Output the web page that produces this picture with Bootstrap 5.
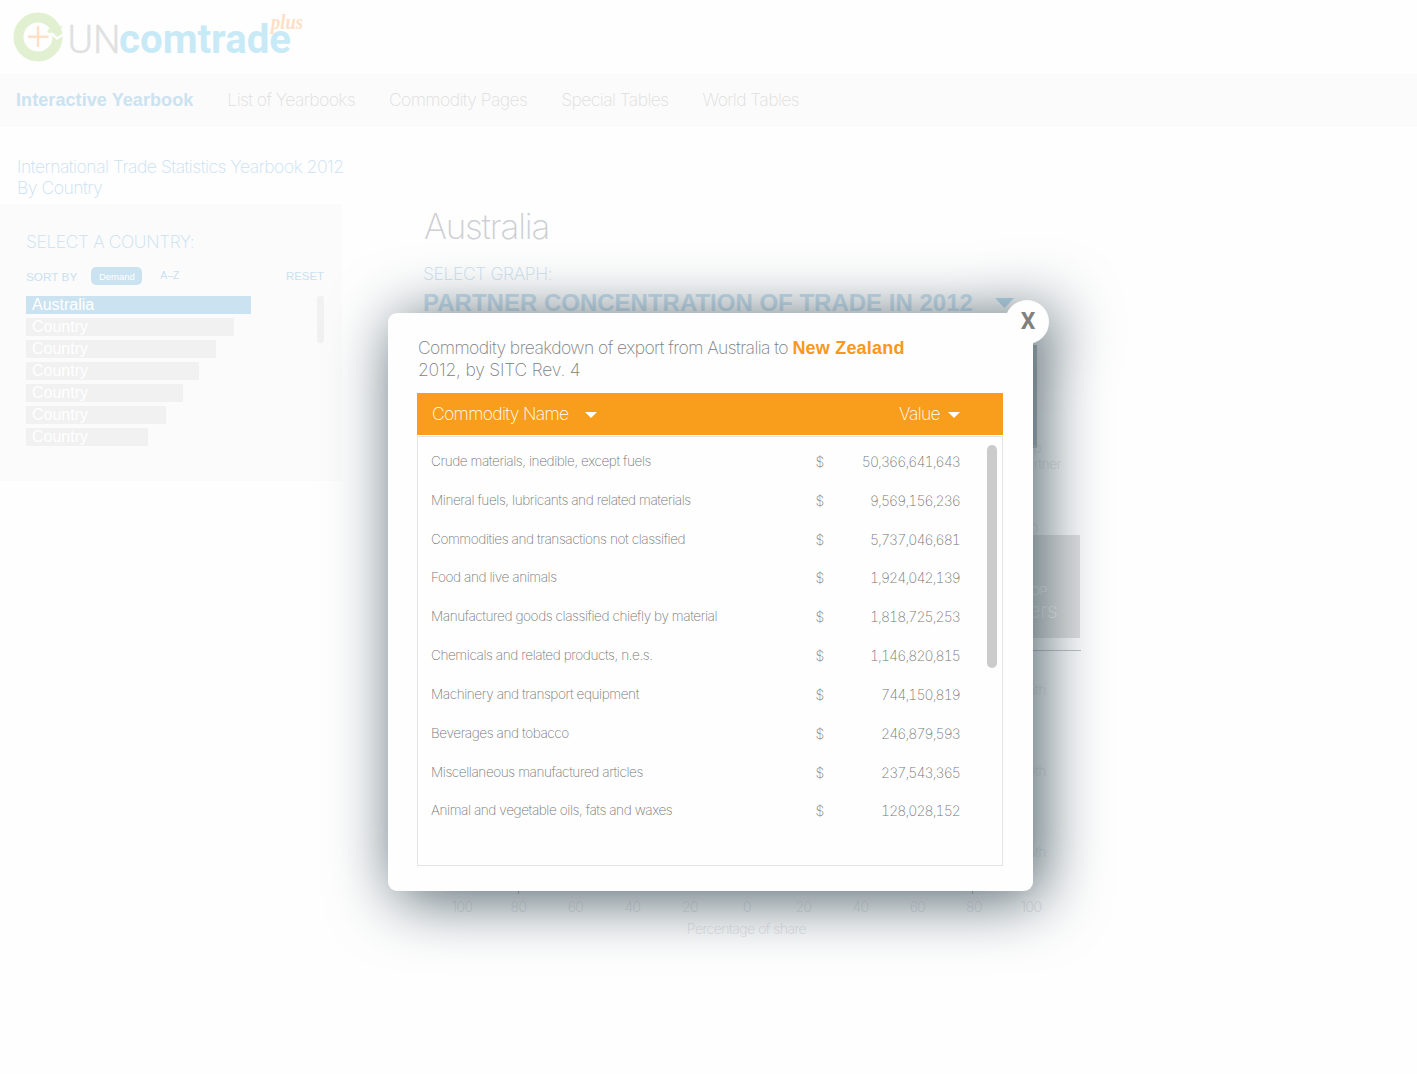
<!DOCTYPE html>
<html lang="en">
<head>
<meta charset="utf-8">
<meta name="viewport" content="width=device-width, initial-scale=1">
<title>UN Comtrade Plus - Interactive Yearbook</title>
<link href="https://cdn.jsdelivr.net/npm/bootstrap@5.3.0/dist/css/bootstrap.min.css" rel="stylesheet">
<style>
  body { font-family: Inter, "Liberation Sans", sans-serif; font-weight: 200; font-size: 17.5px; line-height: 21px; letter-spacing: -.03em; color: #e2e2e2; background: #fefefe; height: 1074px; overflow: hidden; }
  .bold-sans { font-family: "Liberation Sans", Arial, sans-serif; font-weight: 700; letter-spacing: 0; }
  .plain-sans { font-family: "Liberation Sans", Arial, sans-serif; font-weight: 400; letter-spacing: 0; }
  .pale-blue { color: #c9e1f1; }
  .brand-bar { height: 74px; }
  .main-nav { height: 53px; background: #fbfbfb; padding-left: 16px; gap: 34px; }
  .main-nav .nav-link { padding: 0 0 2px; color: #dedede; letter-spacing: -.58px; }
  .main-nav .nav-link.active { color: #cbe2f1; font-size: 18px; padding: 0; letter-spacing: .08px; }
  .side-col { width: 342px; }
  .side-title { padding: 29px 0 6px 17px; height: 77px; white-space: nowrap; letter-spacing: -.47px; }
  .side-panel { background: #fbfbfb; height: 277px; padding: 27px 18px 0 26px; }
  .side-panel h2 { font-size: 17.5px; font-weight: 200; line-height: 21px; letter-spacing: -.4px; margin-bottom: 14px; }
  .sort-row { height: 26px; font-size: 11.4px; line-height: 21px; }
  .sort-label { font-size: 11.8px; line-height: 23px; }
  .sort-alt { font-size: 10.3px; line-height: 20px; }
  .pill { background: #cbe3f1; color: #fff; border-radius: 5px; width: 51px; height: 18px; font-size: 9.5px; line-height: 19px; text-align: center; margin: 1px 18px 0 14px; }
  .country-list { gap: 4px; }
  .country-bar { height: 18px; background: #f1f1f1; color: #fff; font-size: 16px; line-height: 18px; padding-left: 6px; }
  .country-bar.current { background: #cbe3f1; }
  .side-scroll { width: 7px; height: 47px; border-radius: 3px; background: #f1f1f1; }
  .main-col { padding: 77px 0 0 82px; }
  .main-col h1 { font-size: 35px; line-height: 44px; font-weight: 200; letter-spacing: -1.2px; color: #cccfd4; margin: 0 0 15px; }
  .graph-label { letter-spacing: -.35px; margin-left: -1px; }
  .graph-title { font-size: 24px; line-height: 30px; margin: 4px 0 0 -1px; gap: 22px; }
  .chart { display: block; margin-top: 12px; }
  .chart text { font-size: 14px; letter-spacing: -.5px; fill: #dde0e1; }

  .dialog-box { left: 388px; top: 313px; width: 645px; height: 578px; filter: drop-shadow(8px 7px 32px rgb(74, 93, 103)); color: #808080; z-index: 5; }
  .dialog-sheet { background: #fefefe; border: 0; border-radius: 9px; padding: 24px 30px 25px 29px; }
  .dialog-head { height: 56px; padding-left: 1px; line-height: 21.5px; white-space: nowrap; letter-spacing: -.57px; }
  .dialog-head strong { color: #f8981c; font-size: 18px; line-height: 20px; margin-left: 0; letter-spacing: .2px; }
  .grid-head { background: #f99d1c; color: #fff; height: 42px; padding: 0 43px 0 15px; letter-spacing: -.66px; }
  .grid-head span { padding-bottom: 2px; }
  .grid-head svg { position: relative; top: 1px; }
  .name-caret { margin-left: 17px; }
  .grid-body { border: 1px solid #e2e4e4; height: 430px; margin-top: 1px; padding: 5px 42px 0 13px; font-size: 13.6px; letter-spacing: -.43px; }
  .grid-line { height: 38.84px; color: #777; }
  .grid-line .money { width: 144.5px; font-size: 14px; letter-spacing: -.9px; font-variant-numeric: tabular-nums; }
  .grid-scroll { right: 5px; top: 8px; width: 10px; height: 223px; border-radius: 5px; background: #cbcbcb; }
  .dismiss { right: -16px; top: -13px; width: 44px; height: 44px; border: 0; border-radius: 50%; background: #fefefe; color: #808080; font: 700 23px/44px Roboto, sans-serif; padding: 0 0 0 2px; }
</style>
<script src="https://cdn.jsdelivr.net/npm/bootstrap@5.3.0/dist/js/bootstrap.bundle.min.js"></script>
</head>
<body class="position-relative">

<header class="brand-bar">
  <svg width="320" height="74" role="img" aria-label="UN comtrade plus">
    <circle cx="38" cy="37" r="19.500" fill="none" stroke="#e1f0d0" stroke-width="10"/>
    <path d="M50 27.500 L54 30 L63 25.500 L57 36.500 L47 32Z" fill="#e1f0d0"/>
    <path d="M50 34 L52.500 34 L57 38.500 L64 34" fill="none" stroke="#fefefe" stroke-width="2.400"/>
    <path d="M38 26V47M28 36.800H48.500" stroke="#fde0c6" stroke-width="2.400"/>
    <text x="67.500" y="53" font-family="Roboto" font-weight="300" font-size="38" letter-spacing="0" textLength="53" lengthAdjust="spacingAndGlyphs" fill="#e0e0e0" stroke="#e0e0e0" stroke-width=".3">UN</text>
    <text x="119" y="53" font-family="Roboto" font-weight="700" font-size="40" letter-spacing="0" textLength="172" lengthAdjust="spacingAndGlyphs" fill="#c8eaf7">comtrade</text>
    <text x="271" y="29" font-family="Liberation Serif" font-weight="700" font-style="italic" font-size="21" letter-spacing="0" textLength="32" lengthAdjust="spacingAndGlyphs" fill="#fde0c4">plus</text>
  </svg>
</header>

<nav class="main-nav nav flex-nowrap align-items-center">
  <a class="nav-link active bold-sans" href="#">Interactive Yearbook</a>
  <a class="nav-link" href="#">List of Yearbooks</a>
  <a class="nav-link" href="#">Commodity Pages</a>
  <a class="nav-link" href="#">Special Tables</a>
  <a class="nav-link" href="#">World Tables</a>
</nav>

<div class="d-flex">
  <aside class="side-col flex-shrink-0">
    <div class="side-title pale-blue">International Trade Statistics Yearbook 2012<br>By Country</div>
    <div class="side-panel pale-blue">
      <h2>SELECT A COUNTRY:</h2>
      <div class="sort-row plain-sans d-flex">
        <span class="sort-label">SORT BY</span>
        <span class="pill">Demand</span>
        <span class="sort-alt">A–Z</span>
        <span class="ms-auto">RESET</span>
      </div>
      <div class="d-flex justify-content-between pt-1">
        <div class="country-list plain-sans d-flex flex-column">
          <div class="country-bar current" style="width:225px">Australia</div>
          <div class="country-bar" style="width:208px">Country</div>
          <div class="country-bar" style="width:190px">Country</div>
          <div class="country-bar" style="width:173px">Country</div>
          <div class="country-bar" style="width:157px">Country</div>
          <div class="country-bar" style="width:140px">Country</div>
          <div class="country-bar" style="width:122px">Country</div>
        </div>
        <div class="side-scroll"></div>
      </div>
    </div>
  </aside>

  <main class="main-col">
    <h1>Australia</h1>
    <div class="graph-label pale-blue">SELECT GRAPH:</div>
    <div class="graph-title bold-sans d-flex align-items-center pale-blue">
      <span>PARTNER CONCENTRATION OF TRADE IN 2012</span>
      <svg width="19" height="10"><path d="M0 0H19L9.500 10Z" fill="#b9dcf0"/></svg>
    </div>
    <svg class="chart" width="680" height="620" viewBox="424 330 680 620">
      <rect x="1020" y="345" width="17" height="103" fill="#b4bcc1"/>
      <text x="1041" y="453" text-anchor="end">Top</text>
      <text x="1061" y="469" text-anchor="end">Partner</text>
      <text x="1038" y="532" text-anchor="end">n</text>
      <rect x="900" y="535" width="180" height="103" fill="#e0e0e0"/>
      <text x="1047" y="595" text-anchor="end" class="plain-sans" style="font-size:12px;fill:#f8f8f8">TOP</text>
      <text x="1057" y="618" text-anchor="end" style="font-size:21px;fill:#fbfbfb">Partners</text>
      <path d="M440 650.500H1081" stroke="#bcc3c8"/>
      <text x="1046" y="695" text-anchor="end">5th</text>
      <text x="1046" y="776" text-anchor="end">10th</text>
      <text x="1046" y="857" text-anchor="end">15th</text>
      <path d="M462 893.500H1031" stroke="#f6f6f6" stroke-width=".6"/>
      <path d="M518.500 886V894M972.500 886V894" stroke="#b0b4b6"/>
      <g text-anchor="middle">
        <text x="462" y="912">100</text><text x="518.500" y="912">80</text><text x="575.500" y="912">60</text>
        <text x="632.500" y="912">40</text><text x="690" y="912">20</text><text x="747" y="912">0</text>
        <text x="803.500" y="912">20</text><text x="860.500" y="912">40</text><text x="917.500" y="912">60</text>
        <text x="974" y="912">80</text><text x="1031" y="912">100</text>
        <text x="746.500" y="934">Percentage of share</text>
      </g>
    </svg>
  </main>
</div>

<div class="dialog-box position-absolute" role="dialog" aria-label="Commodity breakdown">
  <div class="dialog-sheet card h-100">
    <div class="dialog-head">Commodity breakdown of export from Australia to <strong class="bold-sans">New Zealand</strong><br><span style="letter-spacing:-.2px">2012, by SITC Rev. 4</span></div>
    <div class="grid-head d-flex align-items-center">
      <span>Commodity Name</span>
      <svg class="name-caret" width="12" height="6"><path d="M0 0H12L6 6Z" fill="#fff"/></svg>
      <span class="ms-auto">Value</span>
      <svg class="ms-2" width="12" height="6"><path d="M0 0H12L6 6Z" fill="#fff"/></svg>
    </div>
    <div class="grid-body position-relative">
      <div class="grid-line d-flex align-items-center justify-content-between"><span>Crude materials, inedible, except fuels</span><span class="money d-flex justify-content-between"><span>$</span><span>50,366,641,643</span></span></div>
      <div class="grid-line d-flex align-items-center justify-content-between"><span>Mineral fuels, lubricants and related materials</span><span class="money d-flex justify-content-between"><span>$</span><span>9,569,156,236</span></span></div>
      <div class="grid-line d-flex align-items-center justify-content-between"><span>Commodities and transactions not classified</span><span class="money d-flex justify-content-between"><span>$</span><span>5,737,046,681</span></span></div>
      <div class="grid-line d-flex align-items-center justify-content-between"><span>Food and live animals</span><span class="money d-flex justify-content-between"><span>$</span><span>1,924,042,139</span></span></div>
      <div class="grid-line d-flex align-items-center justify-content-between"><span>Manufactured goods classified chiefly by material</span><span class="money d-flex justify-content-between"><span>$</span><span>1,818,725,253</span></span></div>
      <div class="grid-line d-flex align-items-center justify-content-between"><span>Chemicals and related products, n.e.s.</span><span class="money d-flex justify-content-between"><span>$</span><span>1,146,820,815</span></span></div>
      <div class="grid-line d-flex align-items-center justify-content-between"><span>Machinery and transport equipment</span><span class="money d-flex justify-content-between"><span>$</span><span>744,150,819</span></span></div>
      <div class="grid-line d-flex align-items-center justify-content-between"><span>Beverages and tobacco</span><span class="money d-flex justify-content-between"><span>$</span><span>246,879,593</span></span></div>
      <div class="grid-line d-flex align-items-center justify-content-between"><span>Miscellaneous manufactured articles</span><span class="money d-flex justify-content-between"><span>$</span><span>237,543,365</span></span></div>
      <div class="grid-line d-flex align-items-center justify-content-between"><span>Animal and vegetable oils, fats and waxes</span><span class="money d-flex justify-content-between"><span>$</span><span>128,028,152</span></span></div>
      <div class="grid-scroll position-absolute"></div>
    </div>
  </div>
  <button class="dismiss position-absolute" type="button">X</button>
</div>
</body>
</html>
